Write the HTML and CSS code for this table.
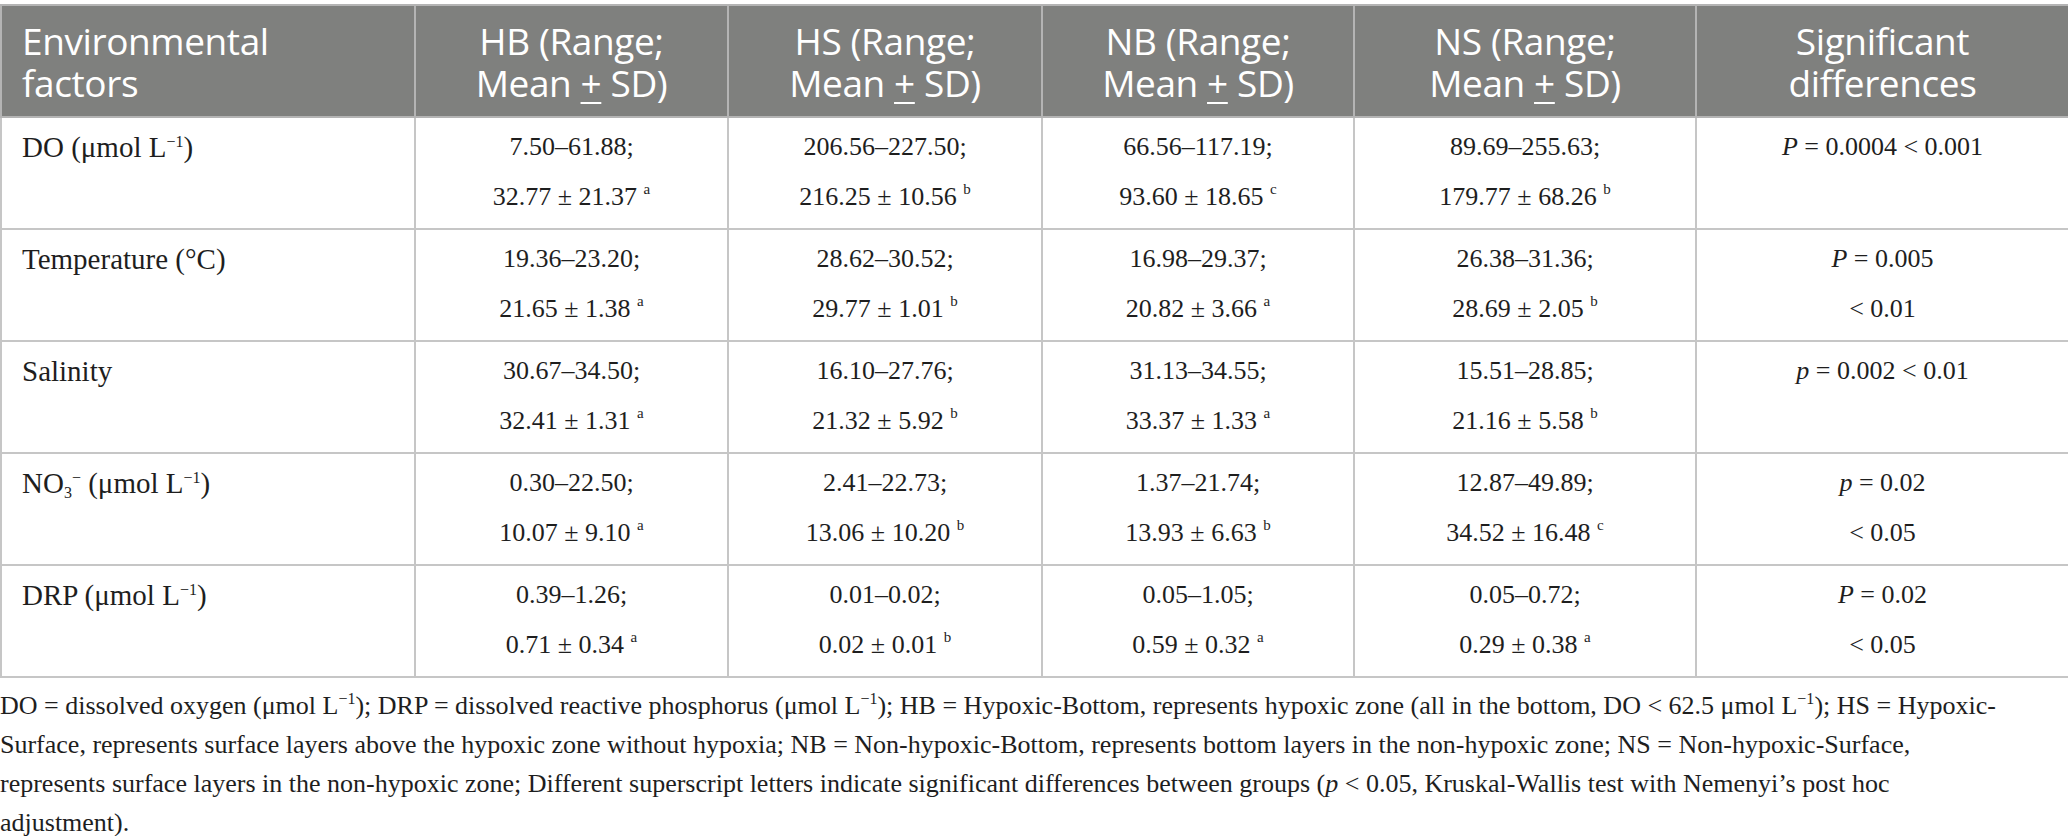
FILE: index.html
```html
<!DOCTYPE html>
<html>
<head>
<meta charset="utf-8">
<link rel="stylesheet" href="styles.css">
</head>
<body>
<div class="page">
<table class="data">
  <colgroup>
    <col class="c1"><col class="c2"><col class="c3"><col class="c4"><col class="c5"><col class="c6">
  </colgroup>
  <thead>
    <tr>
      <th class="left">Environmental<br>factors</th>
      <th>HB (Range;<br>Mean <u>+</u> SD)</th>
      <th>HS (Range;<br>Mean <u>+</u> SD)</th>
      <th>NB (Range;<br>Mean <u>+</u> SD)</th>
      <th>NS (Range;<br>Mean <u>+</u> SD)</th>
      <th>Significant<br>differences</th>
    </tr>
  </thead>
  <tbody>
    <tr>
      <td class="left">DO (μmol L<sup>−1</sup>)</td>
      <td>7.50–61.88;<br>32.77 ± 21.37 <sup class="g">a</sup></td>
      <td>206.56–227.50;<br>216.25 ± 10.56 <sup class="g">b</sup></td>
      <td>66.56–117.19;<br>93.60 ± 18.65 <sup class="g">c</sup></td>
      <td>89.69–255.63;<br>179.77 ± 68.26 <sup class="g">b</sup></td>
      <td><i>P</i> = 0.0004 &lt; 0.001</td>
    </tr>
    <tr>
      <td class="left">Temperature (°C)</td>
      <td>19.36–23.20;<br>21.65 ± 1.38 <sup class="g">a</sup></td>
      <td>28.62–30.52;<br>29.77 ± 1.01 <sup class="g">b</sup></td>
      <td>16.98–29.37;<br>20.82 ± 3.66 <sup class="g">a</sup></td>
      <td>26.38–31.36;<br>28.69 ± 2.05 <sup class="g">b</sup></td>
      <td><i>P</i> = 0.005<br>&lt; 0.01</td>
    </tr>
    <tr>
      <td class="left">Salinity</td>
      <td>30.67–34.50;<br>32.41 ± 1.31 <sup class="g">a</sup></td>
      <td>16.10–27.76;<br>21.32 ± 5.92 <sup class="g">b</sup></td>
      <td>31.13–34.55;<br>33.37 ± 1.33 <sup class="g">a</sup></td>
      <td>15.51–28.85;<br>21.16 ± 5.58 <sup class="g">b</sup></td>
      <td><i>p</i> = 0.002 &lt; 0.01</td>
    </tr>
    <tr>
      <td class="left">NO<sub>3</sub><sup>−</sup> (μmol L<sup>−1</sup>)</td>
      <td>0.30–22.50;<br>10.07 ± 9.10 <sup class="g">a</sup></td>
      <td>2.41–22.73;<br>13.06 ± 10.20 <sup class="g">b</sup></td>
      <td>1.37–21.74;<br>13.93 ± 6.63 <sup class="g">b</sup></td>
      <td>12.87–49.89;<br>34.52 ± 16.48 <sup class="g">c</sup></td>
      <td><i>p</i> = 0.02<br>&lt; 0.05</td>
    </tr>
    <tr>
      <td class="left">DRP (μmol L<sup>−1</sup>)</td>
      <td>0.39–1.26;<br>0.71 ± 0.34 <sup class="g">a</sup></td>
      <td>0.01–0.02;<br>0.02 ± 0.01 <sup class="g">b</sup></td>
      <td>0.05–1.05;<br>0.59 ± 0.32 <sup class="g">a</sup></td>
      <td>0.05–0.72;<br>0.29 ± 0.38 <sup class="g">a</sup></td>
      <td><i>P</i> = 0.02<br>&lt; 0.05</td>
    </tr>
  </tbody>
</table>
<p class="note">DO = dissolved oxygen (μmol L<sup>−1</sup>); DRP = dissolved reactive phosphorus (μmol L<sup>−1</sup>); HB = Hypoxic-Bottom, represents hypoxic zone (all in the bottom, DO &lt; 62.5 μmol L<sup>−1</sup>); HS = Hypoxic-<br>Surface, represents surface layers above the hypoxic zone without hypoxia; NB = Non-hypoxic-Bottom, represents bottom layers in the non-hypoxic zone; NS = Non-hypoxic-Surface,<br>represents surface layers in the non-hypoxic zone; Different superscript letters indicate significant differences between groups (<i>p</i> &lt; 0.05, Kruskal-Wallis test with Nemenyi’s post hoc<br>adjustment).</p>
</div>
</body>
</html>
```

FILE: styles.css
```css
html, body {
  margin: 0;
  padding: 0;
  background: #ffffff;
}

.page {
  width: 2068px;
  padding-top: 4px;
}

.data {
  width: 2068px;
  border-collapse: collapse;
  table-layout: fixed;
  font-family: "Liberation Serif", "Times New Roman", serif;
  font-size: 26px;
  color: #1e1e1e;
}

.c1 { width: 414px; }
.c2 { width: 313px; }
.c3 { width: 314px; }
.c4 { width: 312px; }
.c5 { width: 342px; }
.c6 { width: 373px; }

.data th {
  background: #7f807e;
  color: #ffffff;
  font-family: "Open Sans", "Noto Sans", sans-serif;
  font-weight: 400;
  font-size: 37px;
  line-height: 42px;
  height: 110px;
  box-sizing: border-box;
  padding: 14px 20px 12px;
  text-align: center;
  vertical-align: top;
  border: 2px solid #b4b4b4;
  letter-spacing: -0.4px;
}

.data th u {
  text-decoration-thickness: 2px;
  text-underline-offset: 5px;
}

.data td {
  height: 110px;
  box-sizing: border-box;
  padding: 4px 20px 6px;
  line-height: 50px;
  text-align: center;
  vertical-align: top;
  border: 2px solid #c6c6c6;
}

.data td.left {
  font-size: 29px;
}

.data .left {
  text-align: left;
}

.data sup {
  font-size: 16px;
  line-height: 0;
  vertical-align: 10px;
}

.data sub {
  font-size: 16px;
  line-height: 0;
  vertical-align: -5px;
}

.data sup.g {
  font-size: 15px;
  vertical-align: 11px;
}

.note {
  margin: 8px 0 0;
  font-family: "Liberation Serif", "Times New Roman", serif;
  font-size: 26px;
  line-height: 39px;
  color: #1e1e1e;
  white-space: nowrap;
}

.note sup {
  font-size: 16px;
  line-height: 0;
  vertical-align: 10px;
}
```
